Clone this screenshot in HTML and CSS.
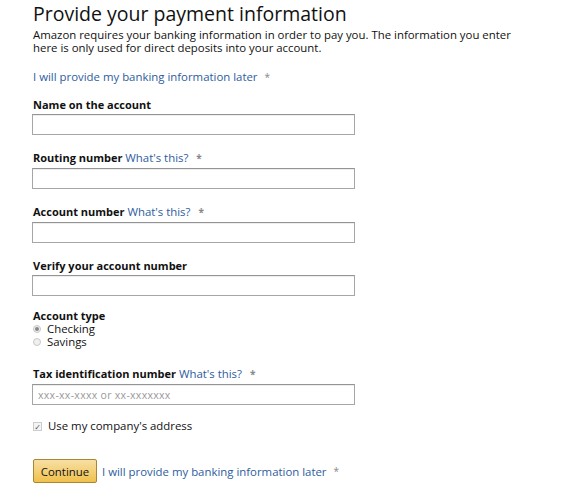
FILE: index.html
```html
<!DOCTYPE html>
<html>
<head>
<meta charset="utf-8">
<link rel="stylesheet" href="styles.css">
</head>
<body>
<div class="page">
  <h1 class="title">Provide your payment information</h1>
  <p class="intro">Amazon requires your banking information in order to pay you. The information you enter here is only used for direct deposits into your account.</p>
  <div class="later-top"><a class="link" href="#">I will provide my banking information later</a><span class="star">*</span></div>

  <div class="field">
    <div class="label">Name on the account</div>
    <input class="input" type="text">
  </div>
  <div class="field">
    <div class="label">Routing number <a class="link help" href="#">What's this?</a><span class="star">*</span></div>
    <input class="input" type="text">
  </div>
  <div class="field">
    <div class="label">Account number <a class="link help" href="#">What's this?</a><span class="star">*</span></div>
    <input class="input" type="text">
  </div>
  <div class="field">
    <div class="label">Verify your account number</div>
    <input class="input" type="text">
  </div>
  <div class="field type">
    <div class="label">Account type</div>
    <label class="radio"><span class="dot checked"></span>Checking</label>
    <label class="radio"><span class="dot"></span>Savings</label>
  </div>
  <div class="field tax">
    <div class="label">Tax identification number <a class="link help" href="#">What's this?</a><span class="star">*</span></div>
    <input class="input" type="text" placeholder="xxx-xx-xxxx or xx-xxxxxxx">
  </div>
  <label class="check"><span class="box">&#10003;</span>Use my company's address</label>

  <div class="actions">
    <button class="btn" type="button">Continue</button>
    <a class="link" href="#">I will provide my banking information later</a><span class="star">*</span>
  </div>
</div>
</body>
</html>
```
FILE: styles.css
```css
* { box-sizing: border-box; }
body {
  margin: 0;
  background: #fff;
  font-family: "Open Sans", "DejaVu Sans", sans-serif;
  font-size: 11.4px;
  color: #111;
}
.page {
  padding: 0 0 0 33px;
  width: 560px;
}
.title {
  margin: 0;
  padding-top: 1px;
  font-size: 19.5px;
  font-weight: normal;
  line-height: 26px;
  color: #111;
}
.intro {
  margin: 1px 0 0;
  line-height: 13px;
  width: 490px;
}
.later-top {
  margin-top: 15px;
  line-height: 16px;
}
.link {
  color: #2d5c9e;
  text-decoration: none;
}
.star {
  color: #888;
  margin-left: 7px;
  font-size: 10px;
}
.help + .star { margin-left: 8px; }
.field {
  margin-top: 12px;
}
.label {
  font-weight: bold;
  font-size: 11px;
  line-height: 15px;
  margin-bottom: 2px;
}
.label .link { font-weight: normal; font-size: 11.4px; }
.input {
  display: block;
  margin-left: -1px;
  width: 323px;
  height: 21px;
  border: 1px solid #a6a6a6;
  border-top-color: #949494;
  box-shadow: inset 0 1px 0 #eee;
  padding: 2px 5px;
  font-family: inherit;
  font-size: 10.5px;
  letter-spacing: 0.3px;
  color: #111;
}
.input::placeholder { color: #999; }
.field + .field { margin-top: 15px; }
.field.type { margin-top: 13px; }
.field.tax { margin-top: 18px; }
.radio {
  display: flex;
  align-items: center;
  line-height: 13px;
}
.dot {
  width: 8px;
  height: 8px;
  border-radius: 50%;
  border: 1px solid #c8c8c8;
  background: #f0f0f0;
  margin-right: 6px;
  position: relative;
}
.dot.checked::after {
  content: "";
  position: absolute;
  left: 1px; top: 1px;
  width: 4px; height: 4px;
  border-radius: 50%;
  background: #888;
}
.type .label { margin-bottom: 0; line-height: 13px; }
.check {
  display: flex;
  align-items: center;
  margin-top: 13px;
  line-height: 16px;
}
.box {
  width: 9px;
  height: 9px;
  border: 1px solid #ccc;
  background: #f4f4f4;
  font-size: 8px;
  line-height: 7px;
  color: #555;
  text-align: center;
  margin-right: 6px;
}
.actions {
  margin-top: 25px;
  display: flex;
  align-items: center;
}
.btn {
  height: 24px;
  width: 64px;
  padding: 0;
  border: 1px solid #a88734;
  border-radius: 2px;
  background: linear-gradient(#f7dfa5, #f0c14b);
  font-family: inherit;
  font-size: 11.4px;
  color: #111;
  margin-right: 5px;
}
```
